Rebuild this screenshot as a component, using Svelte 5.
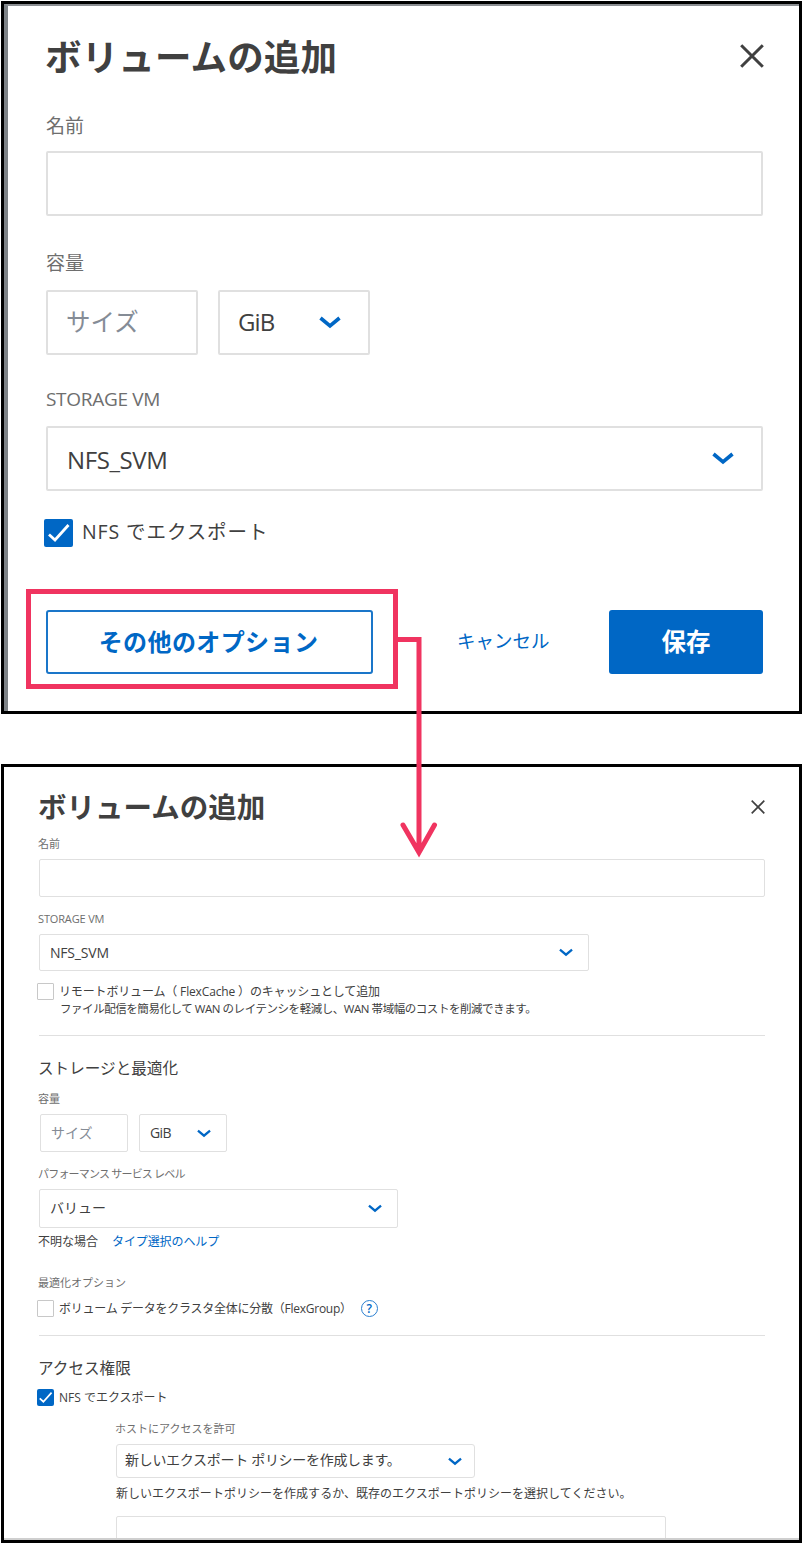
<script lang="ts">
  let quickName = $state('');
  let name = $state('');
  let quickExport = $state(true);
  let nfsExport = $state(true);
  let flexCache = $state(false);
  let flexGroup = $state(false);
</script>

{#snippet chevron()}
  <svg class="chevron" viewBox="0 0 22 13" aria-hidden="true">
    <path d="M1.5 2 L11 10 L20.5 2" />
  </svg>
{/snippet}

{#snippet close()}
  <svg class="close" viewBox="0 0 24 24" aria-hidden="true">
    <path d="M1.2 1.2 L22.8 22.8 M22.8 1.2 L1.2 22.8" />
  </svg>
{/snippet}

{#snippet box(checked: boolean)}
  <span class="box" class:checked>
    {#if checked}
      <svg viewBox="0 0 28 28" aria-hidden="true"><path d="M4.5 15.5 L10.5 21 L24 6" /></svg>
    {/if}
  </span>
{/snippet}

<main>
  <section class="panel quick">
    <header>
      <h1>ボリュームの追加</h1>
      <button class="icon" aria-label="閉じる">{@render close()}</button>
    </header>

    <div class="label name-label">名前</div>
    <input class="field" type="text" bind:value={quickName} />

    <div class="label size-label">容量</div>
    <div class="size">
      <div class="field placeholder"><span>サイズ</span></div>
      <div class="field select"><span class="unit">GiB</span>{@render chevron()}</div>
    </div>

    <div class="label vm-label latin">STORAGE VM</div>
    <div class="field select"><span class="latin">NFS_SVM</span>{@render chevron()}</div>

    <button class="check" onclick={() => (quickExport = !quickExport)}>
      {@render box(quickExport)}
      <span class="text">NFS でエクスポート</span>
    </button>

    <div class="actions">
      <button class="more">その他のオプション</button>
      <button class="cancel">キャンセル</button>
      <button class="save">保存</button>
    </div>

    <div class="highlight"></div>
  </section>

  <section class="panel full">
    <header>
      <h1>ボリュームの追加</h1>
      <button class="icon" aria-label="閉じる">{@render close()}</button>
    </header>

    <div class="label">名前</div>
    <input class="field name-field" type="text" bind:value={name} />

    <div class="label vm-label latin">STORAGE VM</div>
    <div class="field select vm"><span class="latin">NFS_SVM</span>{@render chevron()}</div>

    <button class="check cache" onclick={() => (flexCache = !flexCache)}>
      {@render box(flexCache)}
      <span class="text">リモートボリューム（ FlexCache ）のキャッシュとして追加</span>
    </button>
    <p class="desc">ファイル配信を簡易化して WAN のレイテンシを軽減し、WAN 帯域幅のコストを削減できます。</p>

    <hr />

    <h2>ストレージと最適化</h2>
    <div class="label size-label">容量</div>
    <div class="size">
      <div class="field placeholder"><span>サイズ</span></div>
      <div class="field select"><span class="unit">GiB</span>{@render chevron()}</div>
    </div>

    <div class="label level-label">パフォーマンス サービス レベル</div>
    <div class="field select level"><span>バリュー</span>{@render chevron()}</div>
    <div class="help-row">
      <span>不明な場合</span>
      <span class="link">タイプ選択のヘルプ</span>
    </div>

    <div class="label option-label">最適化オプション</div>
    <div class="group-row">
      <button class="check group" onclick={() => (flexGroup = !flexGroup)}>
        {@render box(flexGroup)}
        <span class="text">ボリューム データをクラスタ全体に分散（FlexGroup）</span>
      </button>
      <span class="help">?</span>
    </div>

    <hr />

    <h2>アクセス権限</h2>
    <button class="check export" onclick={() => (nfsExport = !nfsExport)}>
      {@render box(nfsExport)}
      <span class="text">NFS でエクスポート</span>
    </button>

    <div class="policy">
      <div class="label">ホストにアクセスを許可</div>
      <div class="field select"><span>新しいエクスポート ポリシーを作成します。</span>{@render chevron()}</div>
      <p class="hint">新しいエクスポートポリシーを作成するか、既存のエクスポートポリシーを選択してください。</p>
      <div class="rules"></div>
    </div>
  </section>

  <!-- connector from the highlighted button to the full form -->
  <svg class="arrow" viewBox="0 0 44 230" aria-hidden="true">
    <path d="M1 9.5 H22 V222 M6 195 L22 222.5 L37.5 195" />
  </svg>
</main>

<style>
  :global(body) {
    background: #fff;
  }

  main {
    position: relative;
    box-sizing: border-box;
    width: 803px;
    height: 1544px;
    padding: 1px;
    overflow: hidden;
    color: #404040;
    font-family: 'Open Sans', 'Noto Sans CJK JP', sans-serif;
  }

  main * {
    box-sizing: border-box;
  }

  button {
    margin: 0;
    padding: 0;
    border: 0;
    background: none;
    color: inherit;
    font-family: inherit;
    white-space: nowrap;
  }

  h1,
  h2,
  p {
    margin: 0;
    white-space: nowrap;
  }

  header {
    display: flex;
    align-items: center;
    justify-content: space-between;
  }

  .panel {
    position: relative;
    width: 801px;
    border: 3px solid #000;
    overflow: hidden;
  }

  .label {
    color: #6e6e6e;
    white-space: nowrap;
  }

  .field {
    display: flex;
    align-items: center;
    width: 100%;
    border: 1px solid #e0e0e0;
    border-radius: 2px;
    background: #fff;
    outline: none;
    white-space: nowrap;
  }

  .select {
    justify-content: space-between;
  }

  .size {
    display: flex;
  }

  .placeholder {
    color: #858c96;
  }

  .chevron,
  .close,
  .box svg {
    display: block;
    fill: none;
  }

  .chevron {
    flex: none;
    stroke: #0067c5;
    stroke-width: 3.6;
  }

  .close {
    stroke: #404040;
  }

  .check {
    display: flex;
    align-items: center;
  }

  .box {
    flex: none;
    border: 1px solid #c8c8c8;
    border-radius: 1px;
  }

  .box.checked {
    border: 0;
    border-radius: 2px;
    background: #0067c5;
  }

  .box svg {
    width: 100%;
    height: 100%;
    stroke: #fff;
    stroke-width: 2.8;
  }

  /* quick form */
  .quick {
    height: 713px;
    padding: 27px 36px 0 42px;
  }

  .quick::before {
    content: '';
    position: absolute;
    inset: 0;
    border-top: 2px solid #8b8e92;
    border-left: 4px solid #7d8286;
    pointer-events: none;
  }

  .quick header {
    height: 50px;
    margin-bottom: 31px;
  }

  .quick h1 {
    margin-left: -1px;
    padding-top: 2px;
    font-size: 36.5px;
    line-height: 50px;
    letter-spacing: 0.15px;
  }

  .quick .icon {
    margin-right: -1px;
  }

  .quick .close {
    width: 24px;
    height: 24px;
    stroke-width: 3;
  }

  .quick .label {
    height: 26px;
    font-size: 19px;
    line-height: 28px;
  }

  .quick .label.latin {
    letter-spacing: -0.3px;
    line-height: 26px;
  }

  .quick .field {
    height: 65px;
    border-width: 2px;
    font-size: 24px;
  }

  .quick .name-label {
    margin-bottom: 13px;
  }

  .quick .size-label {
    margin: 33px 0 15px;
  }

  .quick .vm-label {
    margin: 31px 0 14px;
  }

  .quick .size {
    gap: 20px;
  }

  .quick .size .field {
    width: 152px;
    padding: 0 27px 0 18px;
  }

  .quick .placeholder span {
    padding-bottom: 4px;
    font-size: 24.5px;
  }

  .quick .select {
    padding: 0 27px 0 19px;
    letter-spacing: -0.4px;
  }

  .quick .select .latin {
    padding-top: 2px;
  }

  .quick .select .unit {
    padding-bottom: 2px;
    letter-spacing: -0.9px;
  }

  .quick .chevron {
    width: 22px;
    height: 13px;
  }

  .quick .check {
    height: 30px;
    margin: 27px 0 0 -2px;
    gap: 9px;
    font-size: 19.5px;
    letter-spacing: 0.9px;
  }

  .quick .text {
    padding-bottom: 5px;
  }

  .quick .box {
    width: 29px;
    height: 28px;
  }

  .actions {
    display: flex;
    height: 64px;
    margin-top: 62px;
  }

  .more {
    width: 327px;
    padding: 0 2px 4px 0;
    border: 2px solid #1a76c9;
    border-radius: 3px;
    color: #0067c5;
    font-size: 24px;
    font-weight: 700;
    letter-spacing: 0.4px;
  }

  .cancel {
    width: 92px;
    margin: 0 60px 0 84px;
    padding-bottom: 4px;
    color: #0067c5;
    font-size: 18.5px;
  }

  .save {
    width: 154px;
    padding-bottom: 3px;
    border-radius: 3px;
    background: #0067c5;
    color: #fff;
    font-size: 24.5px;
    font-weight: 700;
  }

  .highlight {
    position: absolute;
    left: 22px;
    top: 585px;
    width: 372px;
    height: 100px;
    border: 5px solid #f03460;
    pointer-events: none;
  }

  /* full form */
  .full {
    height: 779px;
    margin-top: 50px;
    padding: 20px 34px 0 35px;
    font-size: 12px;
  }

  .full::after {
    content: '';
    position: absolute;
    inset: auto 0 0;
    height: 2px;
    background: #cfcfcf;
  }

  .full header {
    height: 40px;
    margin-bottom: 9px;
  }

  .full h1 {
    margin-left: -1px;
    font-size: 28.5px;
    line-height: 40px;
  }

  .full .close {
    width: 14px;
    height: 14px;
    stroke-width: 2.8;
  }

  .full .label {
    height: 16px;
    text-indent: -1px;
    font-size: 11px;
    line-height: 16px;
  }

  .full .label.latin {
    letter-spacing: -0.15px;
  }

  .full .field {
    height: 37px;
    padding: 0 15px 0 10px;
    font-size: 14px;
  }

  .full .name-field {
    height: 38px;
    margin-top: 7px;
  }

  .full .vm-label {
    margin: 14px 0 7px;
  }

  .full .vm {
    width: 550px;
    letter-spacing: -0.2px;
  }

  .full .chevron {
    width: 14px;
    height: 9px;
  }

  .full .check {
    height: 17px;
    margin-left: -2px;
    gap: 5px;
    font-size: 12px;
  }

  .full .text {
    padding-bottom: 2px;
  }

  .full .box {
    width: 17px;
    height: 17px;
  }

  .full .cache {
    margin-top: 12px;
    letter-spacing: -0.15px;
  }

  .desc {
    height: 18px;
    padding-left: 21px;
    font-size: 11.5px;
    line-height: 18px;
    letter-spacing: -0.45px;
  }

  hr {
    height: 1px;
    margin: 17px 0 0;
    border: 0;
    background: #e0e0e0;
  }

  h2 {
    height: 24px;
    margin-top: 21px;
    text-indent: -1px;
    font-size: 15.6px;
    font-weight: 400;
    line-height: 23px;
  }

  .full .size-label {
    margin: 10px 0 7px;
  }

  .full .size {
    gap: 11px;
    padding-left: 1px;
  }

  .full .size .field {
    width: 88px;
    height: 38px;
  }

  .full .placeholder span,
  .full .unit {
    padding-bottom: 2px;
  }

  .full .unit {
    letter-spacing: -0.6px;
  }

  .full .level-label {
    margin: 14px 0 7px;
    letter-spacing: -0.8px;
  }

  .full .level {
    width: 359px;
    height: 39px;
  }

  .level span {
    padding-bottom: 4px;
  }

  .help-row {
    display: flex;
    gap: 14px;
    height: 18px;
    margin: 4px 0 0 -1px;
    line-height: 19px;
  }

  .link {
    color: #0067c5;
    letter-spacing: -0.1px;
  }

  .full .option-label {
    margin: 25px 0 8px;
  }

  .group-row {
    display: flex;
    align-items: center;
    height: 19px;
  }

  .full .group {
    letter-spacing: -0.25px;
  }

  .help {
    width: 17px;
    height: 17px;
    margin-left: 9px;
    border: 1.5px solid #2a7fd0;
    border-radius: 50%;
    color: #0067c5;
    font-size: 12px;
    font-weight: 600;
    line-height: 15px;
    text-align: center;
  }

  .full .export {
    margin-top: 8px;
  }

  .policy {
    margin: 15px 0 0 77px;
  }

  .policy .field {
    width: 359px;
    height: 34px;
    margin-top: 7px;
    padding: 0 12px 0 8px;
    border-radius: 3px;
    letter-spacing: -0.3px;
  }

  .policy .field span {
    padding-bottom: 4px;
  }

  .hint {
    height: 18px;
    margin-top: 6px;
    line-height: 19px;
    letter-spacing: 0.03px;
  }

  .rules {
    width: 550px;
    height: 60px;
    margin-top: 14px;
    border: 1px solid #e0e0e0;
    border-radius: 2px;
  }

  .arrow {
    position: absolute;
    left: 397px;
    top: 630px;
    width: 44px;
    height: 230px;
    fill: none;
    stroke: #f03460;
    stroke-width: 5;
    stroke-linecap: round;
    pointer-events: none;
  }
</style>
